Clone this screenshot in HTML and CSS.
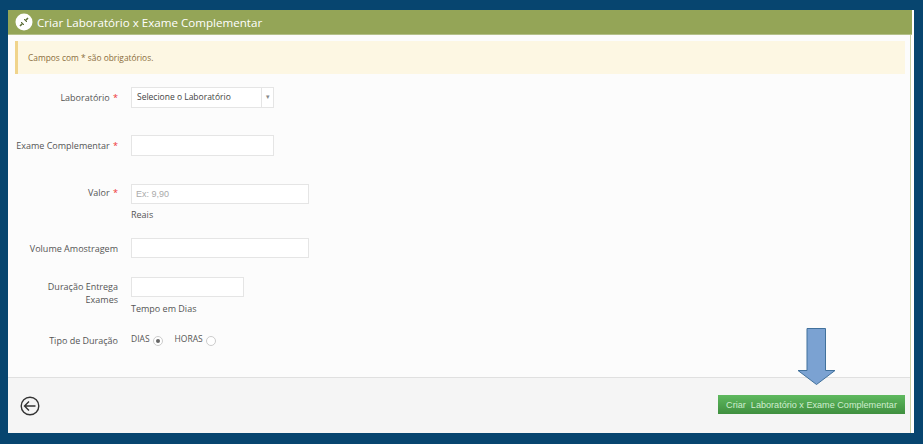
FILE: index.html
```html
<!DOCTYPE html>
<html lang="pt">
<head>
<meta charset="utf-8">
<title>Criar Laboratório x Exame Complementar</title>
<link rel="stylesheet" href="styles.css">
</head>
<body>
<div class="panel">
  <header class="head">
    <span class="head-icon">
      <svg width="18" height="18" viewBox="0 0 18 18"><circle cx="9" cy="9" r="8.5" fill="#fff"/><path d="M5 13l3-3M10 8l3-3" stroke="#5d6f3a" stroke-width="1.6" fill="none"/><path d="M6 9l3 3M9 6l3 3" stroke="#5d6f3a" stroke-width="1" fill="none"/></svg>
    </span>
    <h1 class="title">Criar Laboratório x Exame Complementar</h1>
  </header>
  <div class="body">
    <div class="alert">Campos com * são obrigatórios.</div>
    <form class="form">
      <div class="row row-lab">
        <label class="label">Laboratório <span class="req">*</span></label>
        <div class="select"><span class="select-text">Selecione o Laboratório</span><span class="select-arrow">▾</span></div>
      </div>
      <div class="row row-exame">
        <label class="label">Exame Complementar <span class="req">*</span></label>
        <div class="input w-143"></div>
      </div>
      <div class="row row-valor">
        <label class="label">Valor <span class="req">*</span></label>
        <div>
          <div class="input w-178 placeholder">Ex: 9,90</div>
          <div class="hint">Reais</div>
        </div>
      </div>
      <div class="row row-volume">
        <label class="label">Volume Amostragem</label>
        <div class="input w-178"></div>
      </div>
      <div class="row row-duracao">
        <label class="label">Duração Entrega Exames</label>
        <div>
          <div class="input w-113"></div>
          <div class="hint hint-dias">Tempo em Dias</div>
        </div>
      </div>
      <div class="row row-tipo">
        <label class="label">Tipo de Duração</label>
        <div class="radios">
          <span class="radio-text">DIAS</span><span class="radio checked"></span>
          <span class="radio-text second">HORAS</span><span class="radio"></span>
        </div>
      </div>
    </form>
  </div>
  <footer class="foot">
    <svg class="back" width="20" height="20" viewBox="0 0 20 20"><circle cx="10" cy="10" r="8.8" fill="none" stroke="#333" stroke-width="1.4"/><path d="M15.5 10H4.5M9 5.5L4.5 10 9 14.5" fill="none" stroke="#333" stroke-width="1.4"/></svg>
    <button class="btn" type="button">Criar&nbsp; Laboratório x Exame Complementar</button>
  </footer>
  <svg class="arrow" width="40" height="58" viewBox="0 0 40 58"><path d="M10 .5H28.5V42.5H38L19.5 56.5 1 42.5H10Z" fill="#7ba2d2" stroke="#41719c" stroke-width="1"/></svg>
</div>
</body>
</html>
```
FILE: styles.css
```css
* { box-sizing: border-box; }
html, body { height: 100%; }
body {
  margin: 0;
  padding: 10px 9px 11px 8px;
  background: #07456f;
  font-family: "Open Sans", "Noto Sans", sans-serif;
  font-size: 9px;
  color: #555;
}
.panel {
  position: relative;
  height: 423px;
  display: flex;
  flex-direction: column;
  background: #fcfcfc;
  border-right: 3px solid #fff;
  box-shadow: inset -1px 0 0 #c9d0a5;
}
.head {
  height: 25px;
  margin-right: -1px;
  flex: none;
  display: flex;
  align-items: center;
  gap: 4px;
  padding-left: 7px;
  background: #94a557;
  border-bottom: 1px solid #b4c08a;
}
.head-icon { display: flex; }
.title {
  margin: 0;
  font-size: 11.6px;
  font-weight: 400;
  color: #fff;
}
.body { flex: 1; padding: 6px 5px 0 7px; margin-right: 1px; }
.alert {
  height: 33px;
  line-height: 33px;
  padding-left: 10px;
  background: #fdf7e3;
  border-left: 3px solid #f0d48c;
  color: #8a6d3b;
  font-size: 8.4px;
}
.form { display: flex; flex-direction: column; }
.row { display: grid; grid-template-columns: 103px auto; column-gap: 13px; justify-content: start; }
.label {
  margin-top: 4px;
  text-align: right;
  line-height: 13px;
  color: #555;
}
.req { color: #e33; margin-left: 1px; }
.input {
  height: 21px;
  background: #fff;
  border: 1px solid #e5e5e5;
}
.w-143 { width: 143px; }
.w-178 { width: 178px; height: 20px; }
.w-113 { width: 113px; height: 20px; }
.placeholder {
  padding-left: 4px;
  line-height: 18px;
  font-family: "Liberation Sans", sans-serif;
  color: #aaa;
}
.hint { margin-top: 5px; line-height: 12px; color: #555; }
.hint-dias { margin-top: 6px; }
.select {
  width: 143px;
  height: 21px;
  display: flex;
  background: #fff;
  border: 1px solid #e5e5e5;
}
.select-text { flex: 1; padding-left: 5px; line-height: 17px; font-size: 8.5px; color: #444; }
.select-arrow {
  width: 12px;
  border-left: 1px solid #e5e5e5;
  text-align: center;
  line-height: 17px;
  font-size: 7px;
  color: #888;
}
.row-lab { margin-top: 13px; }
.row-exame { margin-top: 27px; }
.row-valor { margin-top: 28px; }
.row-volume { margin-top: 17px; }
.row-duracao { margin-top: 19px; }
.row-tipo { margin-top: 18px; }
.row-lab .label { margin-top: 4px; }
.row-exame .label { margin-top: 4px; }
.row-valor .label { margin-top: 2px; }
.row-duracao .label { width: 103px; padding-left: 25px; margin-top: 3px; }
.row-tipo .label { margin-top: 1px; }
.radios { display: flex; align-items: flex-start; height: 14px; line-height: 11px; font-size: 8.5px; color: #555; }
.radio {
  width: 10px;
  height: 10px;
  margin: 3px 0 0 3px;
  border: 1px solid #ccc;
  border-radius: 50%;
  background: #fff;
  position: relative;
}
.radio.checked::after {
  content: "";
  position: absolute;
  inset: 2px;
  border-radius: 50%;
  background: #666;
}
.second { margin-left: 12px; }
.foot {
  height: 56px;
  flex: none;
  margin-right: 1px;
  display: flex;
  align-items: center;
  justify-content: space-between;
  padding: 0 5px 0 12px;
  background: #f5f5f5;
  border-top: 1px solid #e0e0e0;
}
.back { margin-top: 1px; }
.btn {
  width: 187px;
  height: 19px;
  margin-top: -2px;
  padding: 0;
  border: 0;
  background: linear-gradient(#5fb95f, #3f8f3f);
  color: #cfeecf;
  font-family: "Liberation Sans", sans-serif;
  font-size: 9.1px;
}
.arrow { position: absolute; left: 789px; top: 318px; }
```
